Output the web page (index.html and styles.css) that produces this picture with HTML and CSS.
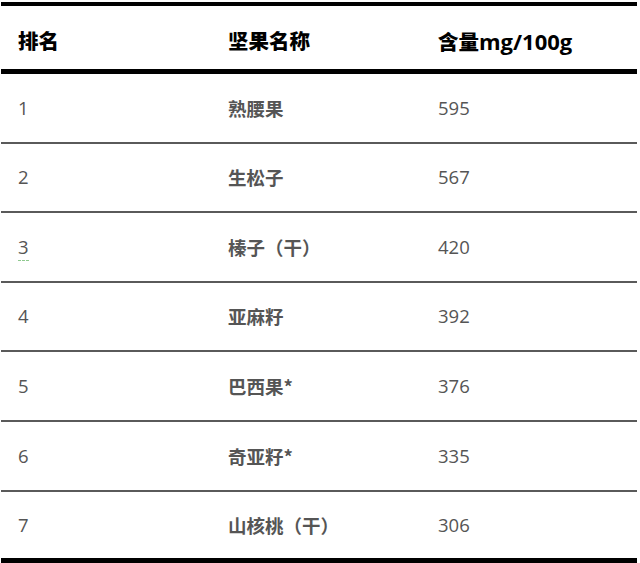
FILE: index.html
```html
<!DOCTYPE html>
<html lang="zh">
<head>
<meta charset="utf-8">
<link rel="stylesheet" href="styles.css">
</head>
<body>
<div class="table">
  <div class="row head">
    <div class="cell">排名</div>
    <div class="cell">坚果名称</div>
    <div class="cell">含量<span class="lat">mg/100g</span></div>
  </div>
  <div class="row">
    <div class="cell num">1</div>
    <div class="cell name">熟腰果</div>
    <div class="cell num">595</div>
  </div>
  <div class="row">
    <div class="cell num">2</div>
    <div class="cell name">生松子</div>
    <div class="cell num">567</div>
  </div>
  <div class="row">
    <div class="cell num"><span class="mark">3</span></div>
    <div class="cell name">榛子（干）</div>
    <div class="cell num">420</div>
  </div>
  <div class="row">
    <div class="cell num">4</div>
    <div class="cell name">亚麻籽</div>
    <div class="cell num">392</div>
  </div>
  <div class="row">
    <div class="cell num">5</div>
    <div class="cell name">巴西果*</div>
    <div class="cell num">376</div>
  </div>
  <div class="row">
    <div class="cell num">6</div>
    <div class="cell name">奇亚籽*</div>
    <div class="cell num">335</div>
  </div>
  <div class="row last">
    <div class="cell num">7</div>
    <div class="cell name">山核桃（干）</div>
    <div class="cell num">306</div>
  </div>
</div>
</body>
</html>
```
FILE: styles.css
```css
html, body {
  margin: 0;
  padding: 0;
  background: #ffffff;
}
body {
  font-family: "Open Sans", "Noto Sans CJK SC", sans-serif;
}
.table {
  margin: 2px 0 0 1px;
  width: 636px;
  border-top: 4px solid #000;
  border-bottom: 5px solid #000;
}
.row {
  display: grid;
  grid-template-columns: 210px 210px 1fr;
  align-items: center;
  padding-left: 17px;
  height: 67.6px;
  border-bottom: 2px solid #5a5a5a;
}
.row.head {
  height: 55px;
  padding-top: 8px;
  border-bottom: 5px solid #000;
  color: #000;
  font-size: 20.5px;
}
.row.last {
  height: 65px;
  padding-top: 1px;
  border-bottom: none;
}
.head .cell {
  font-family: "Open Sans", "Noto Sans CJK SC", sans-serif;
  font-weight: 900;
}
.head .lat {
  font-size: 22px;
  font-weight: 700;
}
.cell {
  white-space: nowrap;
  line-height: 1.2;
}
.num {
  font-size: 18.5px;
  color: #555;
}
.name {
  font-family: "Noto Sans CJK SC", sans-serif;
  font-weight: 700;
  font-size: 18.5px;
  color: #555;
}
.mark {
  border-bottom: 1px dashed #8fc98f;
  padding-bottom: 1px;
}
```
